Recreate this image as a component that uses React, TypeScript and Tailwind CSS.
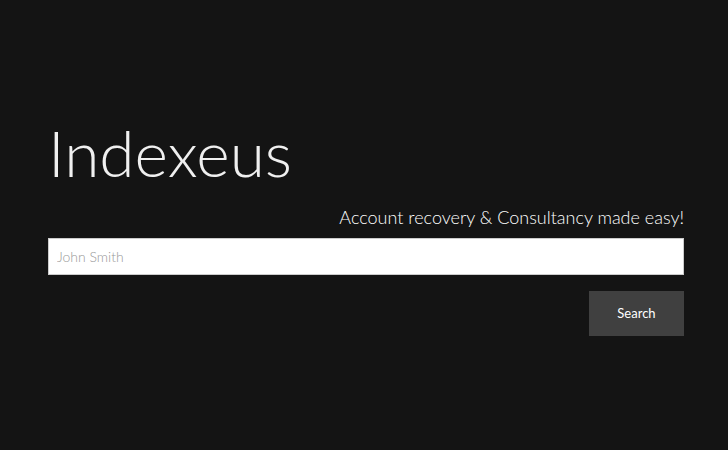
export default function App() {
  return (
    <main className="flex min-h-screen flex-col bg-[#141414] pt-[113px] pr-11 pl-12 font-['Lato',sans-serif] text-white">
      <h1 className="text-[64px] leading-[80px] font-light text-[#f0f0f0]">Indexeus</h1>
      <form className="flex flex-col" onSubmit={(event) => event.preventDefault()}>
        <label htmlFor="query" className="mt-2 text-right text-lg leading-8 font-light">
          Account recovery &amp; Consultancy made easy!
        </label>
        <input
          id="query"
          type="text"
          placeholder="John Smith"
          className="mt-[5px] h-[37px] w-full border border-[#cccccc] bg-white px-2 text-sm font-light text-[#444444] outline-none placeholder:text-[#999999]"
        />
        <button type="submit" className="mt-4 h-[45px] w-[95px] self-end bg-[#404040] text-[13px]">
          Search
        </button>
      </form>
    </main>
  );
}
